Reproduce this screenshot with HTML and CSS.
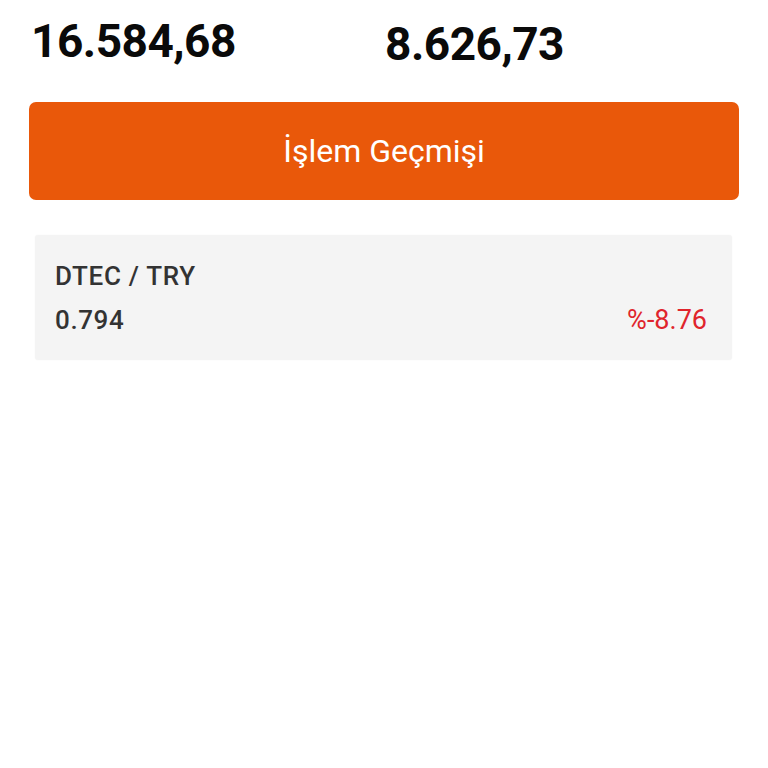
FILE: index.html
```html
<!DOCTYPE html>
<html lang="tr">
<head>
<meta charset="utf-8">
<title>Cüzdan</title>
<link rel="stylesheet" href="styles.css">
</head>
<body>
<div class="page">
  <div class="stats">
    <div class="stat stat-left">
      <div class="stat-value">16.584,68</div>
    </div>
    <div class="stat stat-right">
      <div class="stat-value">8.626,73</div>
    </div>
  </div>
  <button class="history-btn">İşlem Geçmişi</button>
  <div class="asset-card">
    <div class="asset-pair">DTEC / TRY</div>
    <div class="asset-row">
      <span class="asset-price">0.794</span>
      <span class="asset-change">%-8.76</span>
    </div>
  </div>
</div>
</body>
</html>
```

FILE: styles.css
```css
html, body {
  margin: 0;
  padding: 0;
  background: #ffffff;
}

body {
  font-family: Roboto, "Noto Sans", "Liberation Sans", sans-serif;
  color: #111;
  overflow: hidden;
}

.page {
  width: 768px;
  height: 768px;
  overflow: hidden;
}

.stats {
  display: flex;
  align-items: flex-start;
  height: 71px;
}

.stat-left {
  width: 354px;
  padding-left: 31px;
}

.stat-value {
  font-size: 46px;
  line-height: 54px;
  font-weight: 700;
  color: #0a0a0a;
  margin-top: 14px;
  letter-spacing: -0.5px;
}

.stat-right .stat-value {
  margin-top: 17px;
}

.history-btn {
  display: block;
  box-sizing: border-box;
  margin: 31px 29px 0 29px;
  width: 710px;
  height: 98px;
  border: none;
  border-radius: 7px;
  background: #e9580a;
  color: #ffffff;
  font-family: Roboto, "Noto Sans", "Liberation Sans", sans-serif;
  font-size: 32px;
  font-weight: 400;
  padding: 0;
  text-align: center;
}

.asset-card {
  box-sizing: border-box;
  margin: 35px 36px 0 35px;
  height: 125px;
  background: #f4f4f4;
  border-radius: 3px;
  padding: 24px 25px 0 20px;
  box-shadow: 0 0 2px rgba(0, 0, 0, 0.04);
}

.asset-pair {
  font-size: 26px;
  line-height: 34px;
  font-weight: 500;
  letter-spacing: 0.7px;
  color: #333333;
}

.asset-row {
  display: flex;
  justify-content: space-between;
  align-items: baseline;
  margin-top: 10px;
}

.asset-price {
  font-size: 26px;
  line-height: 34px;
  font-weight: 500;
  letter-spacing: 0.6px;
  color: #333333;
}

.asset-change {
  font-size: 27px;
  line-height: 34px;
  font-weight: 400;
  color: #e0242c;
}
```
